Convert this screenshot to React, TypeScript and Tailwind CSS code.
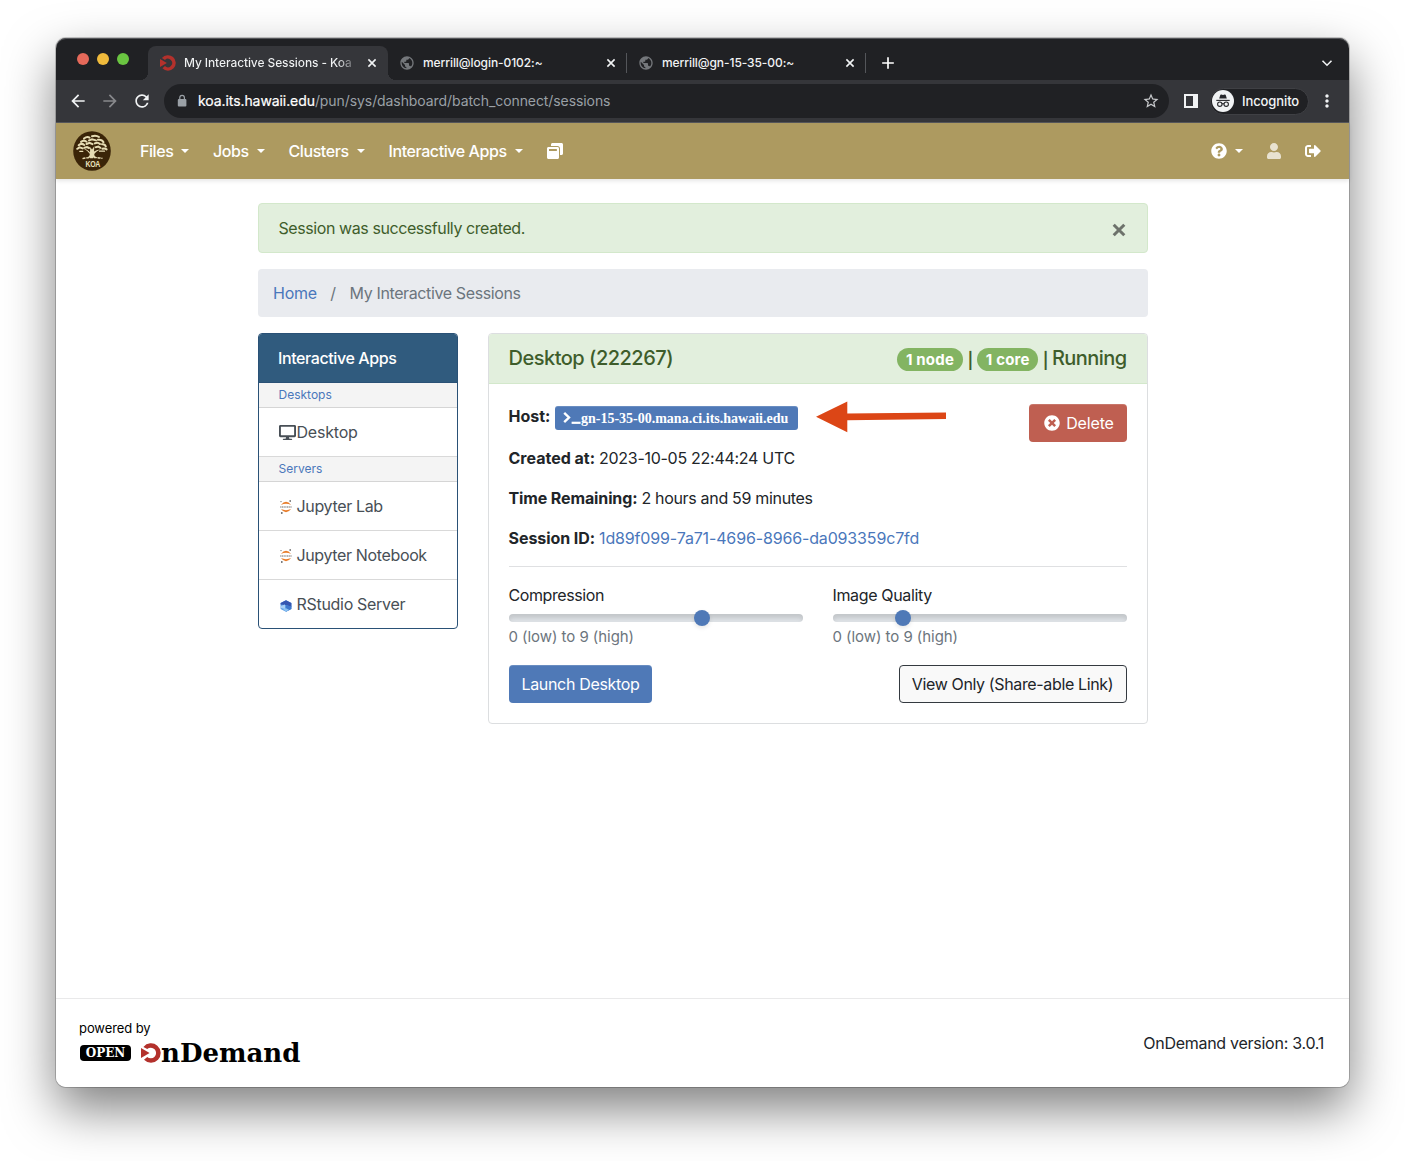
import React from 'react';
import { MdArrowBack, MdArrowForward, MdLock, MdPublic, MdRefresh, MdStarBorder, MdAdd, MdMoreVert } from 'react-icons/md';
import { FaDesktop, FaQuestionCircle, FaSignOutAlt, FaTimesCircle, FaUser, FaWindowRestore } from 'react-icons/fa';

const OnDemandMark = ({ className }: { className: string }) => (
  <svg viewBox="0 0 20 20" className={className}>
    <path d="M2.4 3.9 A9.7 9.7 0 1 1 3 16.7 L6.2 13.9 A5.3 5.3 0 1 0 6.2 6.1 Z" fill="#b3312c" />
    <path d="M0 4.9 L8.6 10 L0 15 Z" fill="#b3312c" />
  </svg>
);

const CloseIcon = ({ className = '' }: { className?: string }) => (
  <svg viewBox="0 0 12 12" className={`size-3 ${className}`}>
    <path d="M2.4 2.4 L9.6 9.6 M9.6 2.4 L2.4 9.6" stroke="#f1f3f4" strokeWidth="1.6" />
  </svg>
);

const JupyterIcon = () => (
  <svg viewBox="0 0 12 14" className="mt-[2px] mr-[2px] h-[14px] w-[12px]">
    <path d="M.9 5 Q6 -1.6 11.1 5 Q6 2.7 .9 5Z" fill="#e87d2b" />
    <path d="M.9 9 Q6 15.6 11.1 9 Q6 11.3 .9 9Z" fill="#e87d2b" />
    <path d="M.2 7 H11.8" stroke="#9a9a9a" strokeWidth="1.3" strokeDasharray="1.2 .5" />
    <circle cx="10.2" cy="1" r=".9" fill="#777" />
    <circle cx="1" cy="1.6" r=".7" fill="#777" />
    <circle cx="1.8" cy="13" r=".9" fill="#666" />
  </svg>
);

const RStudioIcon = () => (
  <svg viewBox="0 0 12 12" className="mt-[3px] mr-[2px] h-3 w-3">
    <path d="M6 .2 L11.4 3 V9 L6 11.8 L.6 9 V3Z" fill="#5b9be3" />
    <path d="M6 .2 L11.4 3 V7 L6 5 L.6 4.4 V3Z" fill="#3556b0" />
    <path d="M6 5 L11.4 6.6 V9 L6 11.8Z" fill="#3f78cc" />
    <path d="M.6 6 L5 4.6 V9 L.6 8Z" fill="#a9d0f5" />
    <path d="M3 9 L6 8.2 L9 9.8 L6 11.8Z" fill="#8cc3f2" />
  </svg>
);

const KoaLogo = () => (
  <svg viewBox="0 0 38 40" className="h-10 w-[38px]">
    <ellipse cx="19" cy="20" rx="18.8" ry="19.8" fill="#3a2408" />
    <g fill="none" stroke="#e6dcb4" strokeLinecap="round" strokeWidth="2">
      <path d="M11 7.6 q3-2.5 5.5-1 M19 5.2 q4-1.4 7 .8 M8 10.9 q3-2.2 5.5-.2 M16 9.4 l3-1 l4 1 M25 8.8 q4-.6 5.5 2.4" />
      <path d="M5.7 14.2 q2.6-2.5 5.6-.2 M13.5 13 l3-1.2 l3 1.4 M21.8 12.4 q3-1.6 5.2.6 M29 13.2 q3-.4 3.8 2.4" />
      <path d="M4.2 17.8 l2.4-1.4 l3 1 M11.4 16.8 l2.6-.8 l2 1 M22.8 16.2 l2.6-.6 l2 1.2 M29.4 17.8 q2.4-.8 4.2.6" />
      <path d="M6.8 20.4 h3 M26.5 20.2 h5" strokeWidth="1.2" />
    </g>
    <path d="M10.5 17.5 Q15.5 19 17 21.4 L17.2 16 L19 18.6 L21.4 15 L21 20.5 Q24 18.4 27.5 18.4 Q22.5 20.5 21.3 23 Q21 25.5 24.5 26.6 L14 26.8 Q17.3 25 16.7 22.8 Q14.5 19.6 10.5 17.5Z" fill="#e6dcb4" />
    <path d="M9.5 27.6 Q19 25.4 29.5 27.4" fill="none" stroke="#e6dcb4" strokeWidth="1.4" strokeDasharray="3 .8" />
    <text x="19.8" y="36" textAnchor="middle" fontSize="8.5" fontWeight="700" fontFamily="Liberation Sans, sans-serif" fill="#ece3bd" textLength="14.5" lengthAdjust="spacingAndGlyphs">KOA</text>
  </svg>
);

const IncognitoIcon = () => (
  <svg viewBox="0 0 22 22" className="size-[22px]">
    <circle cx="11" cy="11" r="11" fill="#f1f3f4" />
    <path d="M7.2 8.6 L8.2 5.2 Q8.5 4.4 9.3 4.6 L11 5 L12.7 4.6 Q13.5 4.4 13.8 5.2 L14.8 8.6Z" fill="#26272b" />
    <path d="M4.3 10.4 H17.7" stroke="#26272b" strokeWidth="1.1" />
    <g fill="none" stroke="#26272b" strokeWidth="1.1">
      <circle cx="7.8" cy="14.2" r="2.2" />
      <circle cx="14.2" cy="14.2" r="2.2" />
      <path d="M10 14 Q11 13.3 12 14" />
    </g>
  </svg>
);

const Caret = () => <span className="h-0 w-0 border-x-[4.5px] border-t-[4.5px] border-x-transparent border-t-white" />;

const BackgroundTab = ({ title }: { title: string }) => (
  <div className="flex h-[34px] w-[239px] items-center pl-[11px]">
    <MdPublic className="size-4 text-[#74777b]" />
    <span className="ml-2 flex-1 text-[12px] font-medium tracking-[-0.08px] text-[#f1f3f4]">{title}</span>
    <CloseIcon />
    <span className="ml-[9px] h-5 w-px bg-[#54565a]" />
  </div>
);

const NavItem = ({ label, width }: { label: string; width: string }) => (
  <div className={`flex items-center justify-between ${width}`}>
    <span>{label}</span>
    <Caret />
  </div>
);

const AppRow = ({ icon, label, tracking }: { icon: React.ReactNode; label: string; tracking: string }) => (
  <div className="flex h-[49px] items-center border-b border-[#d9d9d9] pl-[18.5px] text-[#484f56] last:h-[48px] last:border-b-0">
    <span className="flex w-[19px] justify-center">{icon}</span>
    <span className={tracking}>{label}</span>
  </div>
);

const GroupRow = ({ label }: { label: string }) => (
  <div className="h-[25px] border-b border-[#d5d5d5] bg-[#f4f4f4] pl-[19.5px] text-[12px] leading-[24px] text-[#4a77bb]">{label}</div>
);

const Slider = ({ label, value, tracking }: { label: string; value: number; tracking: string }) => (
  <div className="w-[294px]">
    <div className={`-ml-[0.5px] leading-6 ${tracking}`}>{label}</div>
    <div className="relative mt-[7px] h-2 rounded-full bg-[#dee2e6] shadow-[inset_0_4px_4px_rgba(0,0,0,0.12)]">
      <span
        className="absolute -top-1 size-4 rounded-full bg-[#4f79b7] shadow-[0_2px_4px_rgba(0,0,0,0.1)]"
        style={{ left: `${(value / 9) * (294 - 16)}px` }}
      />
    </div>
    <div className="mt-[3px] -ml-[0.5px] text-[15px] leading-6 tracking-[-0.05px] text-[#6c757d]">0 (low) to 9 (high)</div>
  </div>
);

export default function App() {
  return (
    <div className="h-[1161px] w-[1405px] overflow-hidden bg-white pl-14 pt-[38px] font-['Inter',sans-serif] text-[16px] text-[#212529]">
      <div className="flex h-[1049px] w-[1293px] flex-col rounded-[10px] shadow-[0_0_0_1px_rgba(0,0,0,0.2),0_22px_50px_rgba(0,0,0,0.5)]">
        <div className="flex h-[42px] items-end rounded-t-[10px] bg-[#202124] shadow-[inset_0_1px_0_#55565a]">
          <div className="flex h-full w-[92px] items-center gap-2 pl-[21px]">
            <span className="size-3 rounded-full bg-[#e5695a]" />
            <span className="size-3 rounded-full bg-[#f0bb3c]" />
            <span className="size-3 rounded-full bg-[#6ac541]" />
          </div>
          <div className="relative flex h-[34px] w-60 items-center rounded-t-lg bg-[#35363a] pl-3">
            <span className="absolute -left-2 bottom-0 size-2 bg-[radial-gradient(circle_at_0_0,#202124_8px,#35363a_8px)]" />
            <span className="absolute -right-2 bottom-0 size-2 bg-[radial-gradient(circle_at_100%_0,#202124_8px,#35363a_8px)]" />
            <OnDemandMark className="size-4" />
            <span className="ml-2 w-[170px] bg-[linear-gradient(90deg,#f1f3f4_90%,#6b6c70_99%)] bg-clip-text text-[12px] font-medium tracking-[-0.1px] whitespace-nowrap text-transparent">
              My Interactive Sessions - Koa
            </span>
            <CloseIcon className="ml-3" />
          </div>
          <BackgroundTab title="merrill@login-0102:~" />
          <BackgroundTab title="merrill@gn-15-35-00:~" />
          <div className="flex h-[34px] flex-1 items-center justify-between pr-[14px] pl-3">
            <MdAdd className="size-5 text-white" />
            <svg viewBox="0 0 16 16" className="size-4">
              <path d="M3.5 5.8 L8 10.2 L12.5 5.8" fill="none" stroke="#f1f3f4" strokeWidth="1.6" />
            </svg>
          </div>
        </div>

        <div className="flex h-[43px] items-center border-b border-[#56575b] bg-[#35363a] text-[#f1f3f4]">
          <MdArrowBack className="ml-3 size-5" />
          <MdArrowForward className="ml-3 size-5 text-[#88898c]" />
          <MdRefresh className="ml-3 size-5" />
          <div className="ml-3 flex h-[34px] w-[1005px] items-center rounded-full bg-[#202124] pl-[11px]">
            <svg viewBox="0 0 14 14" className="size-[14px]">
              <rect x="2.8" y="5" width="8.6" height="7.6" rx="1" fill="#9aa0a6" />
              <path d="M4.8 5.4 V3.6 a2.3 2.3 0 0 1 4.6 0 V5.4" fill="none" stroke="#9aa0a6" strokeWidth="1.2" />
            </svg>
            <span className="mb-[2px] ml-[9px] text-[14px] tracking-[-0.08px] text-white [-webkit-text-stroke:0.2px_white]">koa.its.hawaii.edu</span>
            <span className="mb-[2px] flex-1 text-[14px] tracking-[-0.08px] text-[#9aa0a6]">/pun/sys/dashboard/batch_connect/sessions</span>
            <MdStarBorder className="mr-[9px] size-[18px] text-[#c8cacd]" />
          </div>
          <span className="ml-[15px] h-[14px] w-[14px] border-2 border-r-[5px] border-[#f1f3f4]" />
          <div className="ml-3 flex h-[27px] w-[99px] items-center rounded-full border border-[#3f4044] bg-[#202124] pl-px">
            <IncognitoIcon />
            <span className="mt-px ml-2 text-[13px] font-medium tracking-[-0.1px]">Incognito</span>
          </div>
          <MdMoreVert className="ml-[8px] size-5" />
        </div>

        <div className="z-10 flex h-14 items-center bg-[#ad9a60] pl-[17px] font-medium tracking-[-0.42px] text-white shadow-[0_2px_4px_rgba(0,0,0,0.1)]">
          <KoaLogo />
          <div className="ml-[29px] flex gap-6">
            <NavItem label="Files" width="w-[49px]" />
            <NavItem label="Jobs" width="w-[51.5px]" />
            <NavItem label="Clusters" width="w-[76px]" />
            <NavItem label="Interactive Apps" width="w-[134px]" />
          </div>
          <FaWindowRestore className="ml-6 size-4" />
          <div className="ml-auto flex items-center pr-[28px]">
            <FaQuestionCircle className="mr-2 size-4" />
            <Caret />
            <FaUser className="ml-[23px] size-4 text-[#e8e2d0]" />
            <FaSignOutAlt className="ml-[23px] size-4" />
          </div>
        </div>

        <div className="flex flex-1 flex-col bg-white pt-6 pl-[202px]">
          <div className="flex h-[50px] w-[890px] items-center justify-between rounded border border-[#d3e8cb] bg-[#e2efdd] pr-[20.5px] pl-[19.5px] text-[#3e5d2b]">
            <span className="tracking-[-0.42px]">Session was successfully created.</span>
            <svg viewBox="0 0 16 16" className="mt-[3px] size-4">
              <path d="M2.7 2.7 L13.3 13.3 M13.3 2.7 L2.7 13.3" stroke="#6d726b" strokeWidth="3" />
            </svg>
          </div>
          <div className="mt-4 flex h-12 w-[890px] items-center rounded bg-[#e9ebef] pl-[15px] text-[#6c757d]">
            <span className="tracking-[-0.25px] text-[#4a77bb]">Home</span>
            <span className="ml-[13.5px]">/</span>
            <span className="ml-[13.5px] tracking-[-0.38px]">My Interactive Sessions</span>
          </div>

          <div className="mt-4 flex items-start gap-[30px]">
            <div className="h-[296px] w-[200px] overflow-hidden rounded border border-[#2a5176]">
              <div className="h-[49px] border-b border-[#2a5176] bg-[#305b7e] pl-[19px] font-medium leading-[48px] tracking-[-0.4px] text-white">Interactive Apps</div>
              <GroupRow label="Desktops" />
              <AppRow icon={<FaDesktop className="size-[17px]" />} label="Desktop" tracking="tracking-[-0.2px]" />
              <GroupRow label="Servers" />
              <AppRow icon={<JupyterIcon />} label="Jupyter Lab" tracking="tracking-[-0.34px]" />
              <AppRow icon={<JupyterIcon />} label="Jupyter Notebook" tracking="tracking-[-0.36px]" />
              <AppRow icon={<RStudioIcon />} label="RStudio Server" tracking="tracking-[-0.3px]" />
            </div>

            <div className="h-[391px] w-[660px] rounded border border-[#dcdee0]">
              <div className="flex h-[50px] items-center justify-between rounded-t-[3px] border-b border-[#d3e8cb] bg-[#e2efdd] pr-[20.5px] pb-px pl-[19.5px] text-[20px] font-medium tracking-[-0.5px] text-[#3e5d2b]">
                <span className="tracking-[-0.5px]">Desktop (222267)</span>
                <div className="flex items-center">
                  <span className="mt-[2px] flex h-[23px] w-[66px] items-center justify-center rounded-full bg-[#83b462] pt-px text-[15px] leading-5 font-bold tracking-[0.2px] text-white">1 node</span>
                  <span className="mx-[4.5px] mt-[3px] text-[16px] font-semibold">|</span>
                  <span className="mt-[2px] flex h-[23px] w-[61px] items-center justify-center rounded-full bg-[#83b462] pt-px text-[15px] leading-5 font-bold tracking-[0.2px] text-white">1 core</span>
                  <span className="mr-1 ml-[4.5px] mt-[3px] text-[16px] font-semibold">|</span>
                  <span className="tracking-[-0.57px]">Running</span>
                </div>
              </div>

              <div className="flex justify-between px-5 pt-5">
                <div className="-ml-[0.5px] flex flex-col">
                  <div className="flex h-[26px] items-center">
                    <span className="-mt-[3px] font-bold">Host:</span>
                    <span className="mt-[2px] ml-[4.5px] flex h-6 w-[243px] items-center rounded-[3px] bg-[#4f79b7] pl-2 shadow-[inset_0_1px_0_rgba(255,255,255,0.15)]">
                      <svg viewBox="0 0 18 14" className="h-[14px] w-[18px]">
                        <path d="M1.2 1.8 L6 6.5 L1.2 11.2" fill="none" stroke="white" strokeWidth="2.4" />
                        <path d="M8.6 11.8 H17.6" stroke="white" strokeWidth="2.2" />
                      </svg>
                      <span className="font-['Liberation_Serif',serif] text-[14px] font-bold text-white">gn-15-35-00.mana.ci.its.hawaii.edu</span>
                    </span>
                    <svg viewBox="0 0 132 32" className="-mt-px ml-[17px] h-8 w-[132px]">
                      <path d="M1 15.8 L32.3 .4 V12.6 L131 11.5 V18 L32.3 19.2 V31.2Z" fill="#dc4616" />
                    </svg>
                  </div>
                  <div className="mt-4 flex h-6 items-center gap-1">
                    <span className="font-bold">Created at:</span>
                    <span className="tracking-[-0.28px]">2023-10-05 22:44:24 UTC</span>
                  </div>
                  <div className="mt-4 flex h-6 items-center gap-1">
                    <span className="font-bold tracking-[-0.12px]">Time Remaining:</span>
                    <span className="tracking-[-0.32px]">2 hours and 59 minutes</span>
                  </div>
                  <div className="mt-4 flex h-6 items-center gap-1">
                    <span className="font-bold tracking-[-0.06px]">Session ID:</span>
                    <span className="tracking-[-0.15px] text-[#4a77bb]">1d89f099-7a71-4696-8966-da093359c7fd</span>
                  </div>
                </div>
                <div className="flex h-[38px] w-[98px] items-center justify-center rounded bg-[#bf5f51] pl-[2px] text-white shadow-[inset_0_1px_0_rgba(255,255,255,0.15)]">
                  <FaTimesCircle className="mr-[6px] size-4" />
                  <span className="tracking-[-0.15px]">Delete</span>
                </div>
              </div>

              <div className="mx-5 mt-4 border-t border-[#dfe0e2]" />
              <div className="mt-4 flex gap-[30px] pl-5">
                <Slider label="Compression" value={6} tracking="tracking-[-0.4px]" />
                <Slider label="Image Quality" value={2} tracking="tracking-[-0.35px]" />
              </div>
              <div className="mt-4 flex justify-between px-5">
                <div className="flex h-[38px] w-[143px] items-center justify-center rounded bg-[#4f79b7] tracking-[-0.32px] text-white shadow-[inset_0_1px_0_rgba(255,255,255,0.15)]">Launch Desktop</div>
                <div className="flex h-[38px] w-[228px] items-center justify-center rounded border border-[#343a40] bg-[#f9f9f9] pr-px tracking-[-0.36px]">View Only (Share-able Link)</div>
              </div>
            </div>
          </div>
        </div>

        <div className="flex h-[89px] items-center justify-between rounded-b-[10px] border-t border-[#e9e9ea] bg-white pr-[25px] pl-6">
          <div className="flex flex-col">
            <span className="-mt-px -ml-px text-[13px] leading-[18px] tracking-[-0.08px] text-black">powered by</span>
            <div className="mt-[3px] flex h-[26px] items-center text-black">
              <span className="flex h-4 w-[51px] items-center justify-center rounded-[4px] bg-black font-['DejaVu_Serif',serif] text-[12px] leading-4 font-bold text-white">OPEN</span>
              <OnDemandMark className="ml-[10px] size-5" />
              <span className="font-['DejaVu_Serif',serif] text-[26px] leading-[26px] font-bold">nDemand</span>
            </div>
          </div>
          <span className="tracking-[-0.27px]">OnDemand version: 3.0.1</span>
        </div>
      </div>
    </div>
  );
}
